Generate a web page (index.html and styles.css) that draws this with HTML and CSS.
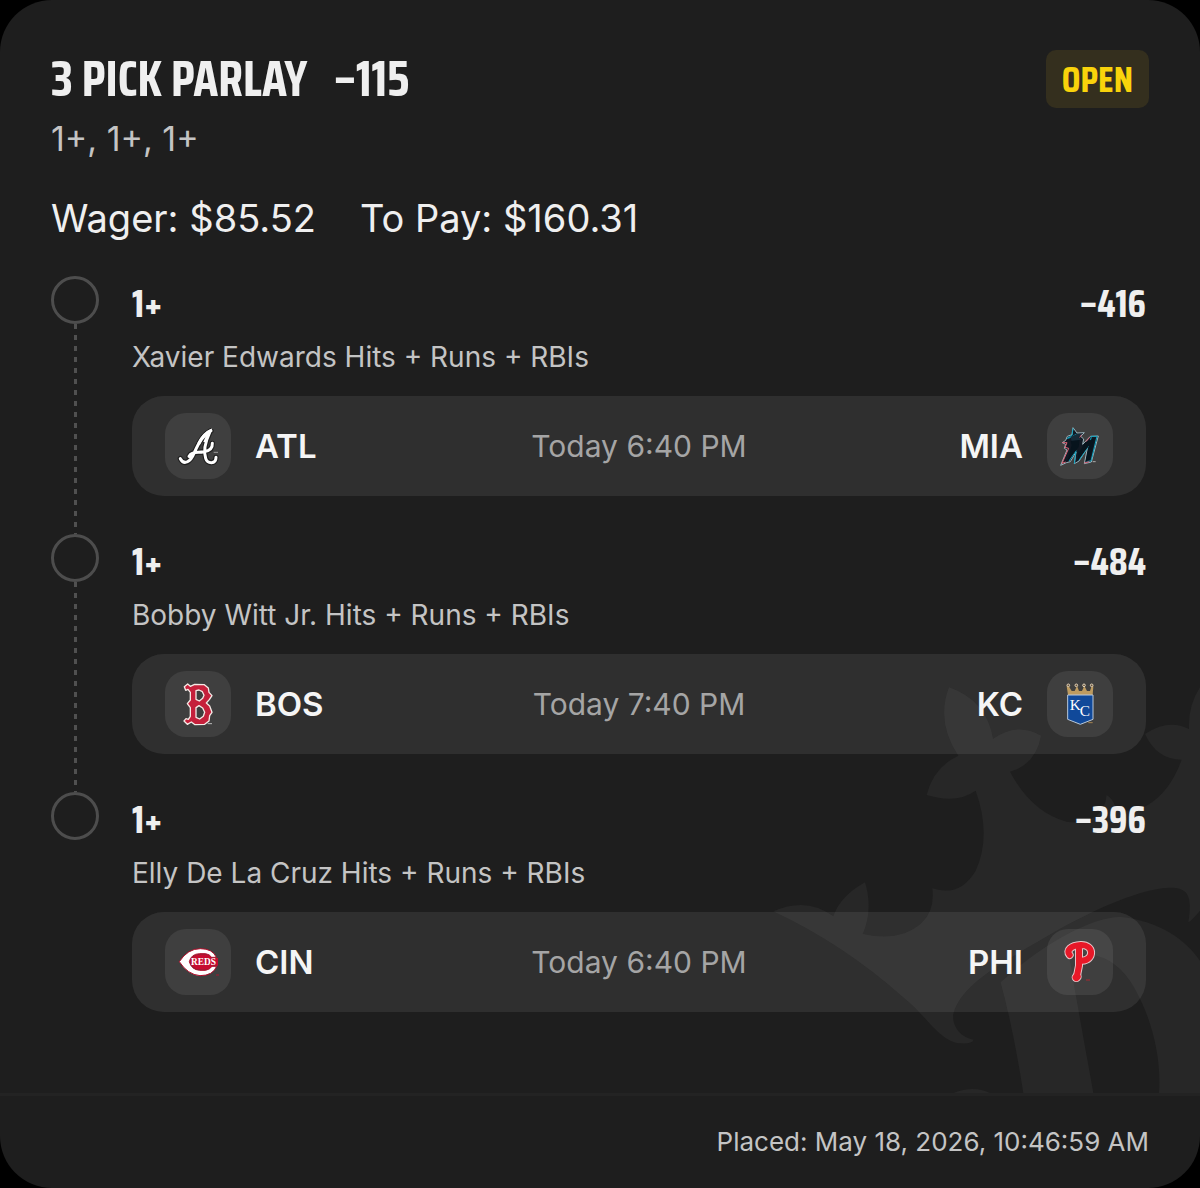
FILE: index.html
```html
<!DOCTYPE html>
<html lang="en">
<head>
    <meta charset="UTF-8">
    <meta name="viewport" content="width=device-width, initial-scale=1.0">
    <title>3 Pick Parlay</title>
    <link rel="stylesheet" href="styles.css">
</head>
<body>
    <main class="slip">
        <div class="slip-body">
            <!-- crown watermark behind the legs -->
            <svg class="watermark" viewBox="0 0 1320 1302" aria-hidden="true">
                <path d="M1320 85Q1284 140 1287 210Q1225 178 1155 225Q1190 302 1265 302Q1230 400 1160 440Q1100 470 1065 440Q1058 420 1040 408Q1036 450 1010 470Q970 495 920 488Q815 460 750 338Q826 318 843 230Q770 188 699 240Q680 125 567 85Q528 190 595 290Q520 325 500 408Q590 435 647 395Q695 530 647 635Q600 715 517 688Q525 755 485 792Q420 850 308 825Q340 750 315 670Q240 712 220 772Q140 712 40 757Q250 855 430 1015C500 1070 540 1152 605 1153Q635 1155 641 1142C600 1135 575 1100 580 1065C600 985 700 925 830 850C960 770 1130 690 1225 686C1290 684 1296 715 1285 790Q1295 785 1320 755Z"/>
                <path d="M722 970C830 870 985 775 1080 774C1200 785 1280 845 1320 905V1302H1197C1206 1180 1165 1050 1110 965Q1040 865 925 890Q935 920 943 985L1000 1302H790Q760 1110 722 970Z"/>
                <path d="M580 1302Q640 1278 690 1302Z"/>
            </svg>

            <header class="slip-header">
                <h1 class="title">3 PICK PARLAY <span class="total-odds">–115</span></h1>
                <span class="status">OPEN</span>
            </header>
            <p class="summary">1+, 1+, 1+</p>
            <p class="stake"><span>Wager: $85.52</span><span>To Pay: $160.31</span></p>

            <ol class="legs">
                <li class="leg">
                    <div class="marker"></div>
                    <div class="leg-info">
                        <div class="leg-head"><h2>1+</h2><span>–416</span></div>
                        <p class="market">Xavier Edwards Hits + Runs + RBIs</p>
                        <div class="game">
                            <div class="team">
                                <svg class="logo" viewBox="15 24 198 198" role="img" aria-label="Atlanta">
                                    <g fill="none" stroke-linecap="round" stroke-linejoin="round">
                                        <path stroke="#202020" stroke-width="16" d="M153 77C125 92 114 119 102 145C92 169 73 183 61 161M150 80C137 108 130 139 137 160C142 177 168 179 168 157M87 154C94 139 112 144 132 140C151 137 158 129 157 115"/>
                                        <path stroke="#fff" stroke-width="9" d="M153 77C125 92 114 119 102 145C92 169 73 183 61 161M150 80C137 108 130 139 137 160C142 177 168 179 168 157M87 154C94 139 112 144 132 140C151 137 158 129 157 115"/>
                                    </g>
                                    <path fill="#fff" d="M157 70Q145 91 141 112L130 111L137 94Q126 105 120 119L112 115Q126 82 157 70Z"/>
                                    <path stroke="#999" stroke-width="3" d="M161 142h13"/>
                                </svg>
                                <span>ATL</span>
                            </div>
                            <time>Today 6:40 PM</time>
                            <div class="team away">
                                <svg class="logo" viewBox="21 24 198 198" role="img" aria-label="Miami">
                                    <path fill="#111923" stroke="#9bb4bd" stroke-width="3" stroke-linejoin="round" d="M62 181L81 135L73 130L77 118L67 113L77 106L82 94L96 89L99 68L111 84L133 83L122 94L131 102L128 118L151 94L175 93L170 111L154 171L133 176L142 130L117 168L103 176L108 141L91 170L79 173Z"/>
                                    <path fill="none" stroke="#12a5c2" stroke-width="3" d="M99 70L96 91L82 100L93 97L110 87M103 176L108 137L87 168M117 166L149 119L154 94H171L153 168H139"/>
                                    <path fill="#07141d" d="M92 109L119 101L113 149L136 112L165 99L149 166L137 169L147 122L113 166L116 126L82 170L95 121Z"/>
                                    <path fill="none" stroke="#df6577" stroke-width="3" d="M67 113L81 113L75 127L86 130L66 175L77 171M125 87L119 98M138 110L149 97M133 174L148 170"/>
                                    <path fill="#172b38" d="M91 96L111 87L127 87L115 96L125 104L95 107Z"/>
                                    <path stroke="#aaa" stroke-width="3" d="M158 170h9"/>
                                </svg>
                                <span>MIA</span>
                            </div>
                        </div>
                    </div>
                </li>
                <li class="leg">
                    <div class="marker"></div>
                    <div class="leg-info">
                        <div class="leg-head"><h2>1+</h2><span>–484</span></div>
                        <p class="market">Bobby Witt Jr. Hits + Runs + RBIs</p>
                        <div class="game">
                            <div class="team">
                                <svg class="logo" viewBox="15 18 198 198" role="img" aria-label="Boston">
                                    <path fill="#c5203b" fill-rule="evenodd" stroke="#f4e9e5" stroke-width="4" stroke-linejoin="round" d="M73 65L83 57L91 64L104 58L133 59L145 69L147 82L156 92L148 104L139 114L149 123L156 142L149 152L147 168L134 178L105 179L94 171L82 178L72 168L78 161L85 163L91 154V128L82 116L91 105V82L84 73L77 76ZM108 77V103L118 108L128 100L132 91L127 80L117 75ZM108 128V157L119 162L130 154L134 142L128 129L117 122Z"/>
                                    <path stroke="#bbb" stroke-width="3" d="M143 176h13"/>
                                </svg>
                                <span>BOS</span>
                            </div>
                            <time>Today 7:40 PM</time>
                            <div class="team away">
                                <svg class="logo" viewBox="21 18 198 198" role="img" aria-label="Kansas City">
                                    <path fill="#bd9b60" d="M84 90L80 64L86 63L95 78L104 78L111 62L117 78H126L133 62L141 78H150L155 63L160 64L158 90Z"/>
                                    <g fill="#66523e" stroke="#e0d1b7" stroke-width="3">
                                        <circle cx="85" cy="61" r="4"/><circle cx="109" cy="61" r="4"/><circle cx="132" cy="61" r="4"/><circle cx="155" cy="61" r="4"/>
                                    </g>
                                    <path fill="#10499a" stroke="#b8c9dc" stroke-width="3" d="M83 90H159V163L121 178L83 163Z"/>
                                    <text class="kc" x="89" y="136">K<tspan dx="-3" dy="16">C</tspan></text>
                                    <path stroke="#a38351" stroke-width="3" d="M145 173h13"/>
                                </svg>
                                <span>KC</span>
                            </div>
                        </div>
                    </div>
                </li>
                <li class="leg">
                    <div class="marker"></div>
                    <div class="leg-info">
                        <div class="leg-head"><h2>1+</h2><span>–396</span></div>
                        <p class="market">Elly De La Cruz Hits + Runs + RBIs</p>
                        <div class="game">
                            <div class="team">
                                <svg class="logo" viewBox="15 20 198 198" role="img" aria-label="Cincinnati">
                                    <path fill="#fff" stroke="#b30e2b" stroke-width="3" d="M58 118Q83 79 121 79Q158 79 169 105H155Q149 96 137 94H119Q93 95 88 118Q94 142 119 144H137Q150 141 156 132H170Q159 160 120 160Q83 157 58 118Z"/>
                                    <path fill="#c60c30" d="M90 118Q94 98 119 96H137Q150 98 157 107H174V130H157Q151 140 137 142H119Q95 139 90 118Z"/>
                                    <text class="reds" x="93" y="127">REDS</text>
                                    <path stroke="#a61930" stroke-width="3" d="M168 158h9"/>
                                </svg>
                                <span>CIN</span>
                            </div>
                            <time>Today 6:40 PM</time>
                            <div class="team away">
                                <svg class="logo" viewBox="21 20 198 198" role="img" aria-label="Philadelphia">
                                    <g fill="none" stroke-linecap="round" stroke-linejoin="round">
                                        <path stroke="#e6c5c8" stroke-width="24" d="M89 98C77 85 93 69 122 68C162 66 164 113 126 115M117 80V130L112 155"/>
                                        <path stroke="#e6c5c8" stroke-width="28" d="M111 163l-2 2"/>
                                        <path stroke="#e81828" stroke-width="18" d="M89 98C77 85 93 69 122 68C162 66 164 113 126 115M117 80V130L112 155"/>
                                        <path stroke="#e81828" stroke-width="22" d="M111 163l-2 2"/>
                                    </g>
                                    <path stroke="#aa2630" stroke-width="3" d="M138 173h12"/>
                                </svg>
                                <span>PHI</span>
                            </div>
                        </div>
                    </div>
                </li>
            </ol>
        </div>
        <footer class="slip-footer">Placed: May 18, 2026, 10:46:59 AM</footer>
    </main>
</body>
</html>
```
FILE: styles.css
```css
*,
*::before,
*::after {
    box-sizing: border-box;
}
body {
    margin: 0;
    background: #000;
    color: #efefef;
    font-family: Inter, "Liberation Sans", sans-serif;
}
h1, h2, p, ol {
    margin: 0;
    padding: 0;
}
.slip {
    background: #1e1e1e;
    border-radius: 52px;
    overflow: hidden;
}
.slip-body {
    position: relative;
    padding: 50px 51px 43px;
    border-bottom: 3px solid #232323;
}
.watermark {
    position: absolute;
    right: 0;
    bottom: 0;
    width: 440px;
    fill: #272727;
}
.slip-header,
.summary,
.stake,
.legs {
    position: relative;
}
.slip-header {
    display: flex;
    justify-content: space-between;
    align-items: center;
}
.title,
.status,
.leg-head {
    font-family: "Saira Condensed", "Roboto Condensed", "Liberation Sans Narrow", "Open Sans Condensed", sans-serif;
    font-weight: 700;
}
.title {
    font-size: 50px;
    line-height: 58px;
}
.total-odds {
    margin-left: 18px;
}
.status {
    padding: 0 16px;
    border-radius: 10px;
    background: #342f1e;
    color: #f9d30b;
    font-size: 37px;
    line-height: 58px;
}
.summary {
    margin-top: 9px;
    color: #c4c4c4;
    font-size: 34px;
    line-height: 44px;
}
.stake {
    display: flex;
    gap: 44px;
    margin-top: 33px;
    font-size: 38px;
    line-height: 48px;
}
.legs {
    margin-top: 34px;
    padding-right: 3px;
    list-style: none;
}
.leg {
    display: flex;
    gap: 33px;
}
.marker {
    display: flex;
    flex-direction: column;
    align-items: center;
    width: 48px;
}
.marker::before {
    content: "";
    flex: none;
    width: 48px;
    height: 48px;
    border: 3px solid #4d4d4d;
    border-radius: 50%;
}
/* dashed line down to the next leg */
.leg:not(:last-child) .marker::after {
    content: "";
    flex: 1;
    width: 3px;
    background: repeating-linear-gradient(#505050 0 5px, transparent 5px 11px);
}
.leg-info {
    flex: 1;
    padding-bottom: 38px;
}
.leg-head {
    display: flex;
    justify-content: space-between;
    font-size: 39px;
    line-height: 56px;
}
.leg-head h2 {
    font-size: 39px;
}
.market {
    margin-top: 7px;
    color: #c4c4c4;
    font-size: 28px;
    line-height: 36px;
}
.game {
    display: grid;
    grid-template-columns: 1fr auto 1fr;
    align-items: center;
    margin-top: 21px;
    padding: 17px 33px;
    border-radius: 32px;
    background: rgba(255, 255, 255, 0.08);
}
.game time {
    color: #a5a5a5;
    font-size: 30px;
}
.team {
    display: flex;
    align-items: center;
    gap: 24px;
    color: #f5f5f5;
    font-size: 33px;
    font-weight: 600;
}
.away {
    flex-direction: row-reverse;
}
.logo {
    width: 66px;
    height: 66px;
    border-radius: 21px;
    background: rgba(255, 255, 255, 0.08);
}
.kc,
.reds {
    fill: #fff;
    font-family: "Liberation Serif", serif;
    font-weight: 700;
}
.kc {
    font-size: 46px;
    font-weight: 400;
}
.reds {
    font-size: 28px;
}
.slip-footer {
    padding: 28px 51px;
    color: #c4c4c4;
    font-size: 26px;
    line-height: 36px;
    text-align: right;
}
```
